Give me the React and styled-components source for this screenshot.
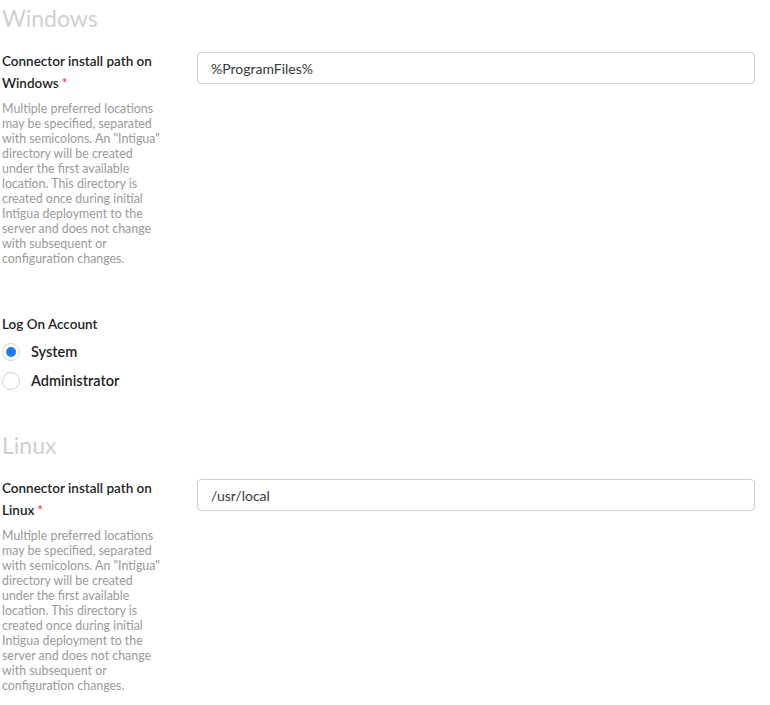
import React from "react";
import styled, { createGlobalStyle } from "styled-components";

const Global = createGlobalStyle`
  html, body { margin: 0; padding: 0; background: #fff; }
  body { font-family: Lato, "Noto Sans", sans-serif; color: #222; }
`;

const Page = styled.div`
  width: 755px;
  padding: 3px 0 0 2px;
  box-sizing: border-box;
`;

const Heading = styled.h2`
  margin: 0;
  font-size: 23px;
  line-height: 30px;
  font-weight: 400;
  color: #d0d0d0;
`;

const Row = styled.div`
  display: grid;
  grid-template-columns: 195px 1fr;
  margin-top: 17px;
`;

const LabelCol = styled.div`
  display: flex;
  flex-direction: column;
`;

const Label = styled.label`
  font-size: 13.5px;
  line-height: 22px;
  font-weight: 600;
  color: #1e1e1e;
  width: 170px;
`;

const Required = styled.span`
  color: #e8474c;
  margin-left: 3px;
`;

const Help = styled.p`
  margin: 7px 0 0;
  font-size: 12.4px;
  line-height: 15px;
  color: #9a9a9a;
  width: 168px;
`;

const HelpLine = styled.span`
  display: block;
  white-space: nowrap;
`;

const Input = styled.input`
  margin-top: 2px;
  height: 32px;
  box-sizing: border-box;
  width: 100%;
  border: 1px solid #cfcfcf;
  border-radius: 4px;
  padding: 0 13px;
  font-family: Lato, "Noto Sans", sans-serif;
  font-size: 14px;
  color: #3a3a3a;
  outline: none;
`;

const Group = styled.div`
  margin-top: ${(p) => p.$top}px;
`;

const GroupLabel = styled.div`
  font-size: 13.5px;
  line-height: 22px;
  font-weight: 600;
  color: #1e1e1e;
`;

const RadioList = styled.div`
  display: flex;
  flex-direction: column;
  margin-top: 2px;
`;

const RadioRow = styled.label`
  display: flex;
  align-items: center;
  gap: 11px;
  height: 29px;
  font-size: 14.5px;
  font-weight: 600;
  color: #1e1e1e;
`;

const Circle = styled.span`
  width: 18px;
  height: 18px;
  box-sizing: border-box;
  border: 1px solid #d4d4d4;
  border-radius: 50%;
  display: flex;
  align-items: center;
  justify-content: center;
  &::after {
    content: "";
    width: 10px;
    height: 10px;
    border-radius: 50%;
    background: ${(p) => (p.$checked ? "#1f7bf0" : "transparent")};
  }
`;

const Section = styled.section`
  margin-top: ${(p) => p.$top || 0}px;
`;

const helpLines = [
  "Multiple preferred locations",
  "may be specified, separated",
  'with semicolons. An "Intigua"',
  "directory will be created",
  "under the first available",
  "location. This directory is",
  "created once during initial",
  "Intigua deployment to the",
  "server and does not change",
  "with subsequent or",
  "configuration changes.",
];

function PathField({ os, value }) {
  return (
    <Row>
      <LabelCol>
        <Label>
          Connector install path on {os}
          <Required>*</Required>
        </Label>
        <Help>
          {helpLines.map((l, i) => (
            <HelpLine key={i}>{l}</HelpLine>
          ))}
        </Help>
      </LabelCol>
      <div>
        <Input defaultValue={value} />
      </div>
    </Row>
  );
}

export default function App() {
  return (
    <>
      <Global />
      <Page>
        <Section>
          <Heading>Windows</Heading>
          <PathField os="Windows" value="%ProgramFiles%" />
          <Group $top={47}>
            <GroupLabel>Log On Account</GroupLabel>
            <RadioList>
              <RadioRow>
                <Circle $checked />
                System
              </RadioRow>
              <RadioRow>
                <Circle />
                Administrator
              </RadioRow>
            </RadioList>
          </Group>
        </Section>
        <Section $top={35}>
          <Heading>Linux</Heading>
          <PathField os="Linux" value="/usr/local" />
        </Section>
      </Page>
    </>
  );
}
